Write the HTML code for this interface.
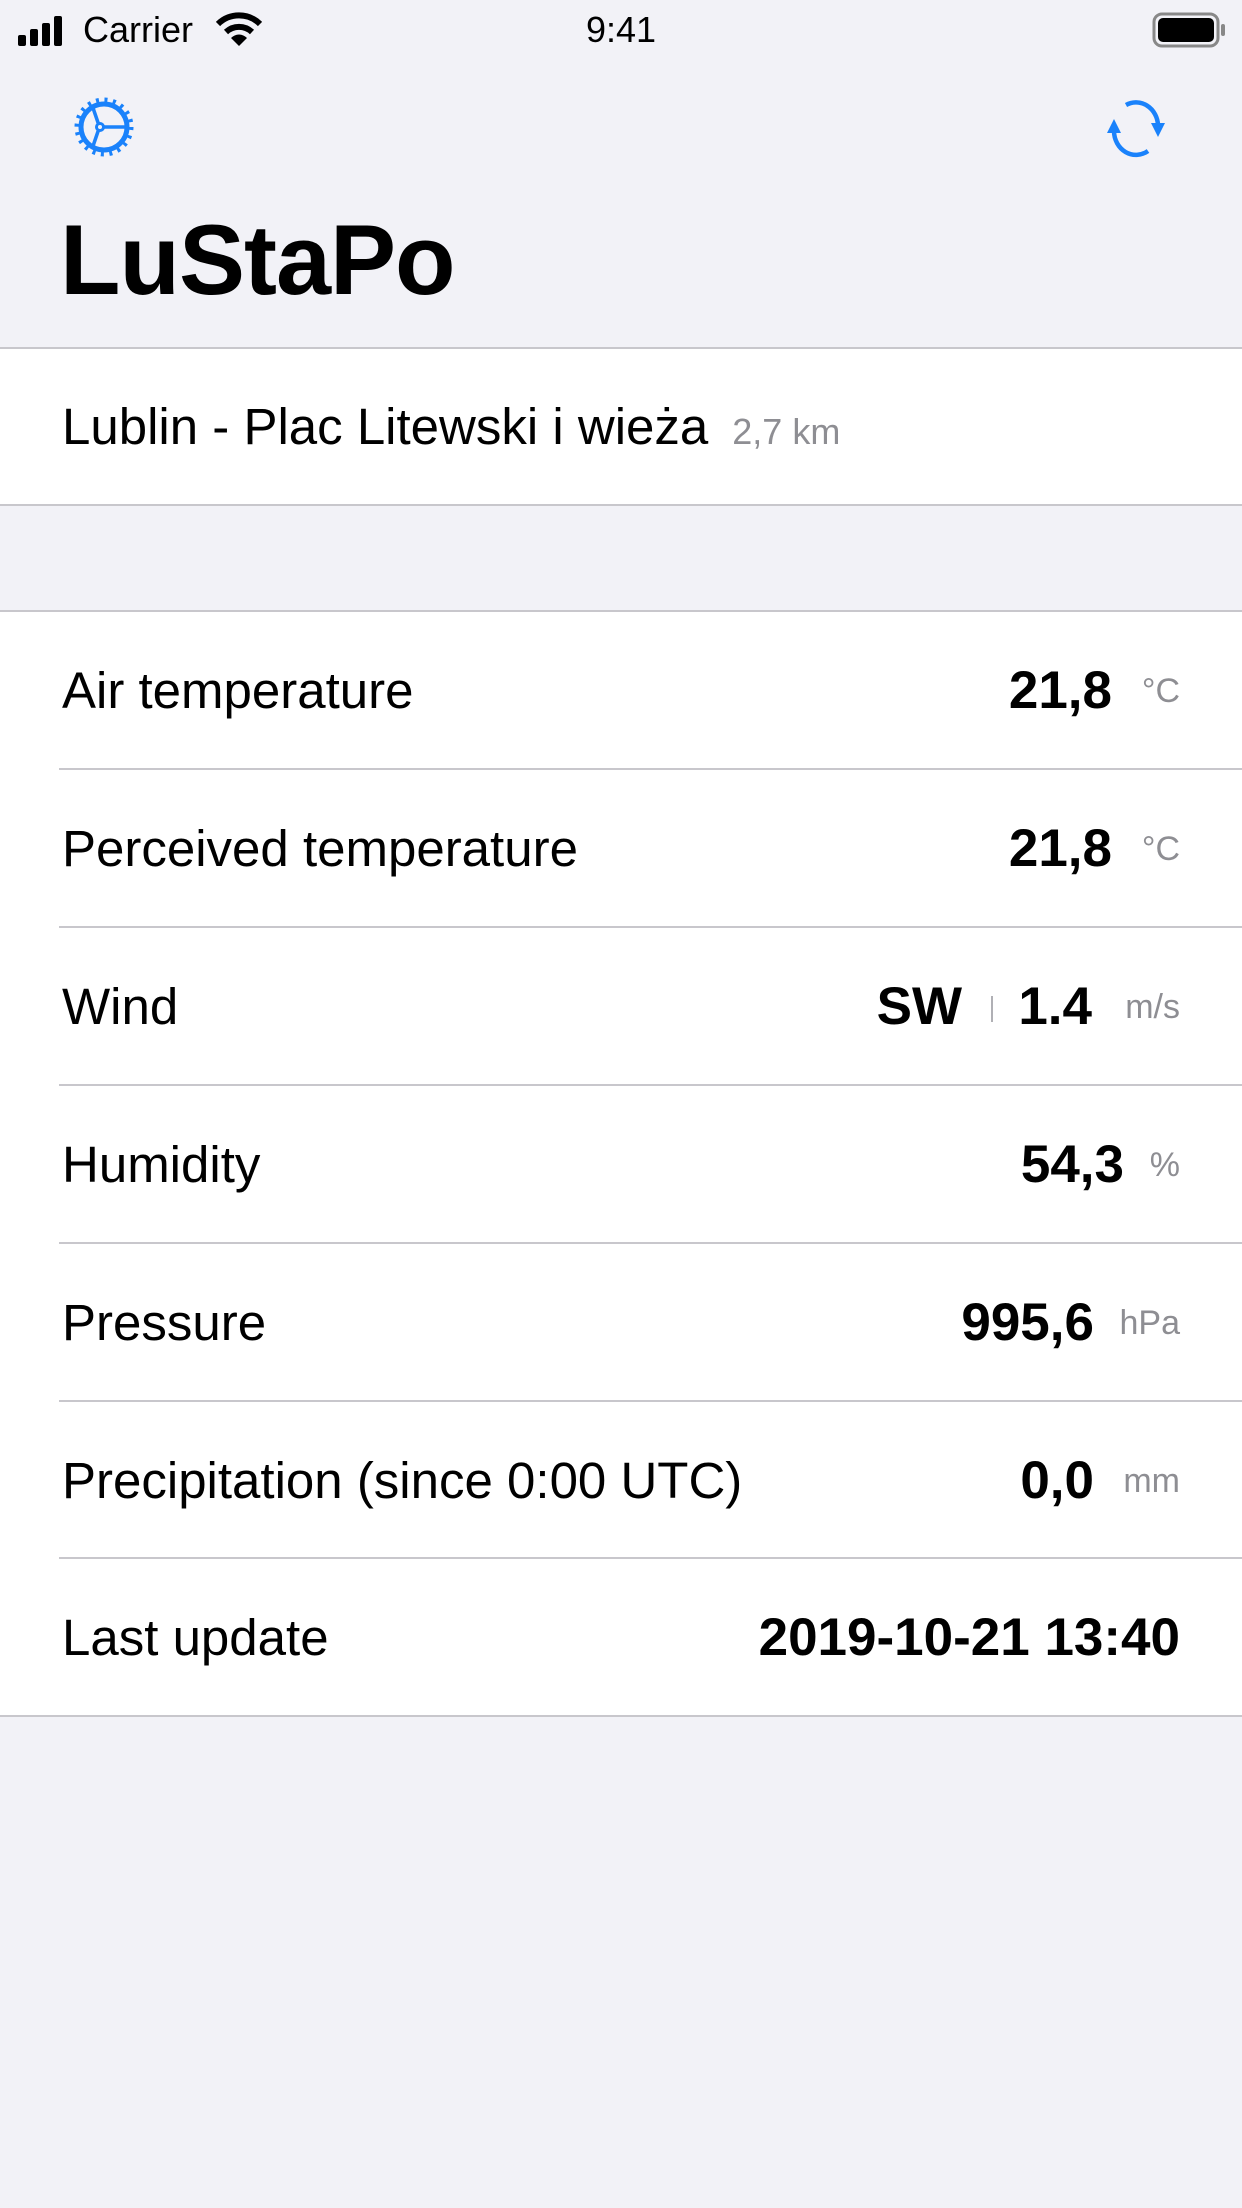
<!DOCTYPE html>
<html><head><meta charset="utf-8">
<style>
*{margin:0;padding:0;box-sizing:border-box}
body{width:1242px;height:2208px;background:#f2f2f7;font-family:"Liberation Sans",sans-serif;position:relative;overflow:hidden;color:#000}
.abs{position:absolute}
.white{background:#fff;left:0;width:1242px}
.hl{position:absolute;height:2px;background:#c8c7cc}
.row{position:absolute;left:0;width:1242px;height:158px}
.lbl{position:absolute;left:62px;top:0;line-height:158px;font-size:51px}
.val{position:absolute;line-height:158px;font-size:53px;font-weight:bold;top:0}
.unit{position:absolute;right:62px;top:0;line-height:158px;font-size:34px;color:#8e8e93}
</style></head><body>
<!-- status bar -->
<svg class="abs" style="left:18px;top:16px" width="52" height="30"><rect x="0" y="19" width="8" height="11" rx="2"/><rect x="12" y="13" width="8" height="17" rx="2"/><rect x="24" y="7" width="8" height="23" rx="2"/><rect x="36" y="0" width="8" height="30" rx="2"/></svg>
<div class="abs" style="left:83px;top:6px;font-size:36px;line-height:48px">Carrier</div>
<svg class="abs" style="left:216px;top:12px" width="46" height="36" viewBox="0 0 46 36"><path d="M2 12 A30 30 0 0 1 44 12" stroke="#000" stroke-width="6" fill="none"/><path d="M10 20 A19 19 0 0 1 36 20" stroke="#000" stroke-width="6" fill="none"/><path d="M23 34 L15 26 A11 11 0 0 1 31 26 Z"/></svg>
<div class="abs" style="left:0;width:1242px;text-align:center;top:6px;font-size:36px;line-height:48px">9:41</div>
<svg class="abs" style="left:1152px;top:12px" width="76" height="36"><rect x="2" y="2" width="64" height="32" rx="8" fill="none" stroke="#888" stroke-width="3"/><rect x="6" y="6" width="56" height="24" rx="5"/><rect x="69" y="12" width="4" height="12" rx="2" fill="#888"/></svg>
<!-- nav icons -->
<svg class="abs" style="left:74px;top:97px" width="60" height="60" viewBox="0 0 60 60">
<g stroke="#1a82fb" fill="none">
<circle cx="30" cy="30" r="23" stroke-width="5"/>
<circle cx="30" cy="30" r="27" stroke-width="5" stroke-dasharray="3 5.5"/>
<circle cx="26" cy="30" r="3.5" stroke-width="3"/>
<path d="M29.5 30 H53 M24.5 27 L18 8 M24.5 33 L18 52" stroke-width="3.5"/>
</g></svg>
<svg class="abs" style="left:1104px;top:97px" width="64" height="62" viewBox="0 0 64 62">
<g stroke="#1a82fb" stroke-width="4.5" fill="none">
<path d="M22 8 A22 24 0 0 1 54 28"/>
<path d="M44 54 A22 24 0 0 1 10 34"/>
</g>
<path d="M54 40 L47 26 L61 26 Z" fill="#1a82fb"/>
<path d="M10 22 L3 36 L17 36 Z" fill="#1a82fb"/>
</svg>
<div class="abs" style="left:60px;top:200px;font-size:99px;font-weight:bold;line-height:120px;letter-spacing:-1px">LuStaPo</div>
<!-- station cell -->
<div class="hl" style="left:0;width:1242px;top:347px"></div>
<div class="abs white" style="top:349px;height:155px"></div>
<div class="abs" style="left:62px;top:349px;line-height:155px;font-size:51px;white-space:nowrap">Lublin - Plac Litewski i wieża<span style="font-size:36px;color:#8e8e93;margin-left:24px">2,7 km</span></div>
<div class="hl" style="left:0;width:1242px;top:504px"></div>
<!-- table -->
<div class="hl" style="left:0;width:1242px;top:610px"></div>
<div class="abs white" style="top:612px;height:1103px"></div>
<div class="row" style="top:612px"><div class="lbl">Air temperature</div><div class="val" style="right:130px">21,8</div><div class="unit">°C</div></div>
<div class="hl" style="left:59px;width:1183px;top:768px"></div>
<div class="row" style="top:770px"><div class="lbl">Perceived temperature</div><div class="val" style="right:130px">21,8</div><div class="unit">°C</div></div>
<div class="hl" style="left:59px;width:1183px;top:926px"></div>
<div class="row" style="top:928px"><div class="lbl">Wind</div><div class="val" style="right:280px">SW</div><div class="abs" style="left:991px;top:68px;width:2px;height:26px;background:#b0b0b5"></div><div class="val" style="right:150px">1.4</div><div class="unit">m/s</div></div>
<div class="hl" style="left:59px;width:1183px;top:1084px"></div>
<div class="row" style="top:1086px"><div class="lbl">Humidity</div><div class="val" style="right:118px">54,3</div><div class="unit" style="right:62px">%</div></div>
<div class="hl" style="left:59px;width:1183px;top:1242px"></div>
<div class="row" style="top:1244px"><div class="lbl">Pressure</div><div class="val" style="right:148px">995,6</div><div class="unit">hPa</div></div>
<div class="hl" style="left:59px;width:1183px;top:1400px"></div>
<div class="row" style="top:1402px"><div class="lbl">Precipitation (since 0:00 UTC)</div><div class="val" style="right:148px">0,0</div><div class="unit">mm</div></div>
<div class="hl" style="left:59px;width:1183px;top:1557px"></div>
<div class="row" style="top:1559px"><div class="lbl">Last update</div><div class="val" style="right:62px">2019-10-21 13:40</div></div>
<div class="hl" style="left:0;width:1242px;top:1715px"></div>
</body></html>
